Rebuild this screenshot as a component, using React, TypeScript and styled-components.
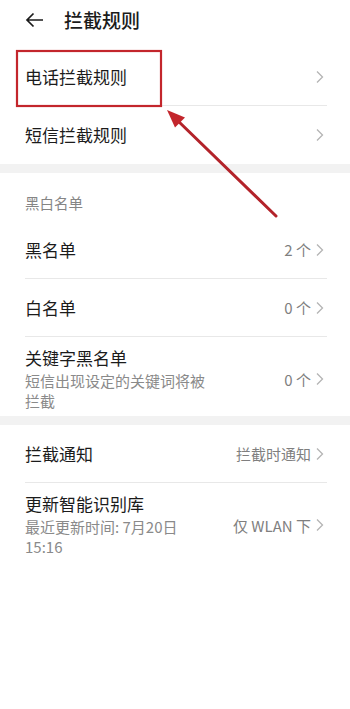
import React from 'react';
import styled, { createGlobalStyle } from 'styled-components';

const GlobalStyle = createGlobalStyle`
  html, body {
    margin: 0;
    padding: 0;
    background: #ffffff;
  }
  body {
    font-family: "Noto Sans CJK SC", "Noto Sans", Roboto, sans-serif;
    color: #1b1b1b;
  }
`;

const Page = styled.div`
  position: relative;
  width: 350px;
  min-height: 709px;
  background: #ffffff;
  overflow: hidden;
`;

const Header = styled.div`
  display: flex;
  align-items: center;
  height: 40px;
  padding-left: 25px;
  gap: 20px;
`;

const Title = styled.div`
  font-size: 19px;
  font-weight: 500;
  line-height: 24px;
`;

const Group = styled.div<{ $top?: number }>`
  padding-top: ${(p) => p.$top ?? 0}px;
`;

const Band = styled.div`
  height: 9px;
  background: #f2f2f2;
`;

const SectionTitle = styled.div`
  padding: 20px 25px 8px;
  font-size: 14.5px;
  line-height: 20px;
  color: #858585;
`;

const Row = styled.div<{ $last?: boolean; $tall?: boolean }>`
  display: flex;
  align-items: center;
  justify-content: space-between;
  min-height: 58px;
  box-sizing: border-box;
  margin: 0 23px 0 25px;
  padding: ${(p) => (p.$tall ? '10px 0 5px' : '0')};
  border-bottom: ${(p) => (p.$last ? 'none' : '1px solid #e8e8e8')};
`;

const Texts = styled.div`
  display: flex;
  flex-direction: column;
  max-width: 190px;
`;

const Label = styled.div`
  font-size: 17px;
  line-height: 22px;
  white-space: nowrap;
`;

const Sub = styled.div`
  margin-top: 2px;
  font-size: 15px;
  line-height: 20px;
  color: #8a8a8a;
`;

const Right = styled.div`
  display: flex;
  align-items: center;
  gap: 5px;
  font-size: 15px;
  color: #7f7f7f;
  padding-right: 3px;
`;

const Overlay = styled.svg`
  position: absolute;
  left: 0;
  top: 0;
  pointer-events: none;
`;

const Chevron = () => (
  <svg width="8" height="14" viewBox="0 0 8 14">
    <path d="M1 1.5 L6.5 7 L1 12.5" fill="none" stroke="#b4b4b4" strokeWidth="1.3" />
  </svg>
);

const BackArrow = () => (
  <svg width="19" height="16" viewBox="0 0 19 16">
    <path d="M18 8 H2 M8.5 1.5 L2 8 L8.5 14.5" fill="none" stroke="#1b1b1b" strokeWidth="1.7" />
  </svg>
);

interface ItemProps {
  label: string;
  sub?: string;
  value?: string;
  last?: boolean;
}

const Item = ({ label, sub, value, last }: ItemProps) => (
  <Row $last={last} $tall={!!sub}>
    <Texts>
      <Label>{label}</Label>
      {sub && <Sub>{sub}</Sub>}
    </Texts>
    <Right>
      {value && <span>{value}</span>}
      <Chevron />
    </Right>
  </Row>
);

export default function App() {
  return (
    <Page>
      <GlobalStyle />
      <Header>
        <BackArrow />
        <Title>拦截规则</Title>
      </Header>

      <Group $top={8}>
        <Item label="电话拦截规则" />
        <Item label="短信拦截规则" last />
      </Group>
      <Band />

      <Group>
        <SectionTitle>黑白名单</SectionTitle>
        <Item label="黑名单" value="2 个" />
        <Item label="白名单" value="0 个" />
        <Item label="关键字黑名单" sub="短信出现设定的关键词将被拦截" value="0 个" last />
      </Group>
      <Band />

      <Group>
        <Item label="拦截通知" value="拦截时通知" />
        <Item label="更新智能识别库" sub="最近更新时间: 7月20日 15:16" value="仅 WLAN 下" last />
      </Group>

      {/* annotation drawn over the screenshot */}
      <Overlay width="350" height="709" viewBox="0 0 350 709">
        <rect x="17" y="51" width="144" height="55" fill="none" stroke="#c3262c" strokeWidth="2.2" />
        <line x1="276" y1="216" x2="176" y2="119" stroke="#b3232a" strokeWidth="3" strokeLinecap="round" />
        <polygon points="167,110 185,117.5 175,127.5" fill="#c3262c" />
      </Overlay>
    </Page>
  );
}
